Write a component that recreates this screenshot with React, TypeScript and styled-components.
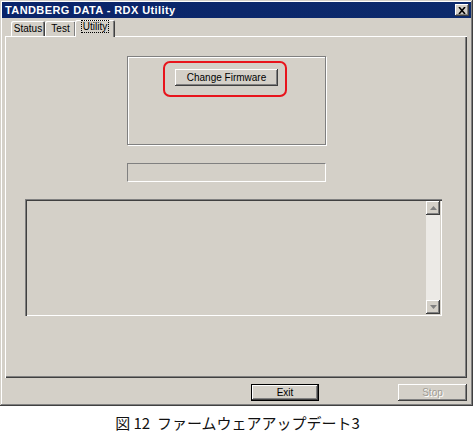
import React from 'react'
import styled, { createGlobalStyle } from 'styled-components'

const GlobalStyle = createGlobalStyle`
  body {
    margin: 0;
    background: #ffffff;
    font-family: 'Liberation Sans', Arial, sans-serif;
  }
`

const Page = styled.div`
  width: 475px;
  height: 439px;
  display: flex;
  flex-direction: column;
`

const Window = styled.div`
  box-sizing: border-box;
  width: 473px;
  height: 406px;
  padding: 2px;
  background: #d4d0c8;
  box-shadow: inset -1px -1px 0 #404040, inset 1px 1px 0 #d4d0c8,
    inset -2px -2px 0 #808080, inset 2px 2px 0 #ffffff;
  display: flex;
  flex-direction: column;
`

const TitleBar = styled.div`
  height: 16px;
  background: linear-gradient(90deg, #0a246a 0%, #0c2a6c 100%);
  display: flex;
  align-items: center;
  justify-content: space-between;
  padding: 0 2px 0 3px;
`

const Title = styled.span`
  color: #ffffff;
  font-weight: bold;
  font-size: 11px;
  letter-spacing: 0.4px;
`

const CloseButton = styled.div`
  box-sizing: border-box;
  width: 14px;
  height: 12px;
  background: #d4d0c8;
  box-shadow: inset -1px -1px 0 #404040, inset 1px 1px 0 #ffffff,
    inset -2px -2px 0 #808080;
  display: flex;
  align-items: center;
  justify-content: center;
`

const Body = styled.div`
  display: flex;
  flex-direction: column;
  margin: 1px 4px 0 3px;
`

const TabRow = styled.div`
  height: 17px;
  display: flex;
  align-items: flex-end;
  padding-left: 6px;
`

const Tab = styled.div<{ $active?: boolean; $w: number }>`
  box-sizing: border-box;
  width: ${({ $w }) => $w}px;
  height: ${({ $active }) => ($active ? 17 : 15)}px;
  margin: 0 ${({ $active }) => ($active ? -1 : 0)}px
    ${({ $active }) => ($active ? -1 : 0)}px;
  position: relative;
  z-index: ${({ $active }) => ($active ? 2 : 1)};
  background: #d4d0c8;
  border-radius: 2px 2px 0 0;
  box-shadow: inset 1px 1px 0 #ffffff, inset -1px 0 0 #404040,
    inset -2px 0 0 #808080;
  font-size: 10px;
  color: #000000;
  display: flex;
  align-items: ${({ $active }) => ($active ? 'flex-start' : 'center')};
  justify-content: center;
  padding-top: ${({ $active }) => ($active ? 1 : 0)}px;
`

const FocusLabel = styled.span`
  outline: 1px dotted #000000;
  outline-offset: 0;
  padding: 0 1px;
  line-height: 11px;
`

const Panel = styled.div`
  box-sizing: border-box;
  height: 342px;
  background: #d4d0c8;
  box-shadow: inset 1px 1px 0 #ffffff, inset -1px -1px 0 #404040,
    inset -2px -2px 0 #808080;
  padding: 20px 0 0 20px;
  display: flex;
  flex-direction: column;
`

const GroupBox = styled.div`
  box-sizing: border-box;
  width: 199px;
  height: 89px;
  margin-left: 102px;
  border: 1px solid #808080;
  box-shadow: inset 1px 1px 0 #ffffff, 1px 1px 0 #ffffff;
  padding: 4px 0 0 35px;
`

const Highlight = styled.div`
  box-sizing: border-box;
  width: 124px;
  height: 36px;
  border: 2px solid #e8141c;
  border-radius: 7px;
  padding: 6px 0 0 10px;
`

const Button = styled.div<{ $w: number; $default?: boolean; $disabled?: boolean }>`
  box-sizing: border-box;
  width: ${({ $w }) => $w}px;
  height: 17px;
  background: #d4d0c8;
  font-size: 10px;
  color: ${({ $disabled }) => ($disabled ? '#a09c94' : '#000000')};
  text-shadow: ${({ $disabled }) => ($disabled ? '1px 1px 0 #ffffff' : 'none')};
  display: flex;
  align-items: center;
  justify-content: center;
  box-shadow: ${({ $default }) =>
    $default
      ? 'inset 0 0 0 1px #000000, inset -2px -2px 0 #404040, inset 2px 2px 0 #ffffff, inset -3px -3px 0 #808080'
      : 'inset -1px -1px 0 #404040, inset 1px 1px 0 #ffffff, inset -2px -2px 0 #808080'};
`

const Progress = styled.div`
  box-sizing: border-box;
  width: 199px;
  height: 19px;
  margin: 18px 0 0 102px;
  border-top: 1px solid #808080;
  border-left: 1px solid #808080;
  border-bottom: 1px solid #ffffff;
  border-right: 1px solid #ffffff;
`

const LogBox = styled.div`
  box-sizing: border-box;
  width: 417px;
  height: 117px;
  margin-top: 17px;
  background: #d4d0c8;
  box-shadow: inset 1px 1px 0 #808080, inset 2px 2px 0 #404040,
    inset -1px -1px 0 #ffffff, inset -2px -2px 0 #d4d0c8;
  padding: 2px;
  display: flex;
  justify-content: flex-end;
`

const ScrollBar = styled.div`
  width: 14px;
  display: flex;
  flex-direction: column;
  background: #eceae6;
`

const ScrollTrack = styled.div`
  flex: 1;
`

const ArrowButton = styled.div`
  box-sizing: border-box;
  width: 14px;
  height: 14px;
  background: #d4d0c8;
  box-shadow: inset -1px -1px 0 #404040, inset 1px 1px 0 #ffffff,
    inset -2px -2px 0 #808080;
  display: flex;
  align-items: center;
  justify-content: center;
`

const Footer = styled.div`
  display: flex;
  margin-top: 6px;
  padding-left: 246px;
  gap: 79px;
`

const Caption = styled.div`
  margin-top: 8px;
  width: 475px;
  text-align: center;
  font-family: 'Noto Sans CJK JP', sans-serif;
  font-size: 15px;
  line-height: 18px;
  color: #111111;
  white-space: pre;
`

const Arrow = ({ up }: { up?: boolean }) => (
  <svg width="7" height="4" viewBox="0 0 7 4">
    <path d={up ? 'M3.5 0 L7 4 L0 4 Z' : 'M0 0 L7 0 L3.5 4 Z'} fill="#808080" />
  </svg>
)

const App = () => {
  return (
    <>
      <GlobalStyle />
      <Page>
        <Window>
          <TitleBar>
            <Title>TANDBERG DATA - RDX Utility</Title>
            <CloseButton>
              <svg width="8" height="7" viewBox="0 0 8 7">
                <path d="M1 0 L7 7 M7 0 L1 7" stroke="#000" strokeWidth="1.6" />
              </svg>
            </CloseButton>
          </TitleBar>
          <Body>
            <TabRow>
              <Tab $w={34}>Status</Tab>
              <Tab $w={31}>Test</Tab>
              <Tab $w={40} $active>
                <FocusLabel>Utility</FocusLabel>
              </Tab>
            </TabRow>
            <Panel>
              <GroupBox>
                <Highlight>
                  <Button $w={103}>Change Firmware</Button>
                </Highlight>
              </GroupBox>
              <Progress />
              <LogBox>
                <ScrollBar>
                  <ArrowButton>
                    <Arrow up />
                  </ArrowButton>
                  <ScrollTrack />
                  <ArrowButton>
                    <Arrow />
                  </ArrowButton>
                </ScrollBar>
              </LogBox>
            </Panel>
            <Footer>
              <Button $w={68} $default>
                Exit
              </Button>
              <Button $w={69} $disabled>
                Stop
              </Button>
            </Footer>
          </Body>
        </Window>
        <Caption>{'図 12  ファームウェアアップデート3'}</Caption>
      </Page>
    </>
  )
}

export default App
